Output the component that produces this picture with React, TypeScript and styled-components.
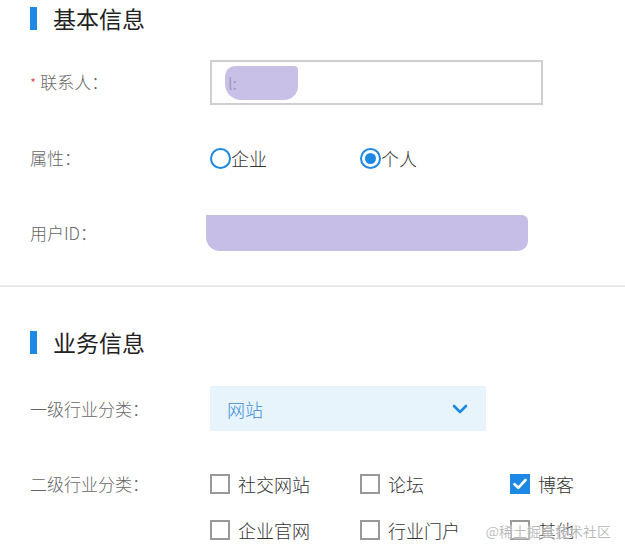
import styled, { createGlobalStyle } from 'styled-components';

const GlobalStyle = createGlobalStyle`
  body {
    margin: 0;
    background: #fff;
    font-family: "Noto Sans CJK SC", "Noto Sans", sans-serif;
  }
`;

const BLUE = '#1e88e5';

const CHECK_OPTIONS = [
  { label: '社交网站', checked: false },
  { label: '论坛', checked: false },
  { label: '博客', checked: true },
  { label: '企业官网', checked: false },
  { label: '行业门户', checked: false },
  { label: '其他', checked: false },
];

const App = () => {
  return (
    <Page>
      <GlobalStyle />
      <Section>
        <Heading>基本信息</Heading>
        <Rows>
          <Row>
            <Label>
              <Required>*</Required>联系人：
            </Label>
            <TextBox>
              <Redaction $width={73} $height={34}>
                <Faded>l:</Faded>
              </Redaction>
            </TextBox>
          </Row>
          <Row>
            <Label>属性：</Label>
            <RadioGroup>
              <RadioItem>
                <RadioCircle $checked={false} />
                企业
              </RadioItem>
              <RadioItem>
                <RadioCircle $checked />
                个人
              </RadioItem>
            </RadioGroup>
          </Row>
          <Row>
            <Label>用户ID：</Label>
            <IdRedaction />
          </Row>
        </Rows>
      </Section>
      <Divider />
      <Section $top={44}>
        <Heading>业务信息</Heading>
        <Rows $top={32}>
          <Row>
            <Label>一级行业分类：</Label>
            <Select>
              <span>网站</span>
              <svg width='16' height='10' viewBox='0 0 16 10'>
                <path d='M2 2l6 6 6-6' fill='none' stroke={BLUE} strokeWidth='2.6' strokeLinecap='round' strokeLinejoin='round' />
              </svg>
            </Select>
          </Row>
          <CheckRow>
            <Label>二级行业分类：</Label>
            <CheckGrid>
              {CHECK_OPTIONS.map((option) => (
                <CheckItem key={option.label}>
                  <CheckBox $checked={option.checked}>
                    {option.checked && (
                      <svg width='14' height='12' viewBox='0 0 14 12'>
                        <path d='M1.5 6.2l3.8 3.6L12.5 2' fill='none' stroke='#fff' strokeWidth='2.6' strokeLinecap='round' strokeLinejoin='round' />
                      </svg>
                    )}
                  </CheckBox>
                  {option.label}
                </CheckItem>
              ))}
            </CheckGrid>
          </CheckRow>
        </Rows>
      </Section>
      <Watermark>@稀土掘金技术社区</Watermark>
    </Page>
  );
};

const Page = styled.div`
  position: relative;
  width: 625px;
  height: 557px;
  overflow: hidden;
`;

const Section = styled.section<{ $top?: number }>`
  padding: ${({ $top }) => $top ?? 7}px 0 30px 30px;
`;

const Heading = styled.h2`
  display: flex;
  align-items: center;
  height: 23px;
  margin: 0;
  color: #222;
  font-size: 23px;
  font-weight: 400;
  line-height: 23px;

  &::before {
    content: '';
    width: 7px;
    height: 23px;
    margin-right: 16px;
    background-color: ${BLUE};
  }
`;

const Rows = styled.div<{ $top?: number }>`
  display: flex;
  flex-direction: column;
  gap: 31px;
  margin-top: ${({ $top }) => $top ?? 30}px;
`;

const Row = styled.div`
  display: flex;
  align-items: center;
  min-height: 44px;
`;

const CheckRow = styled.div`
  display: flex;
  align-items: flex-start;
`;

const Label = styled.div`
  width: 180px;
  flex-shrink: 0;
  color: #666;
  font-size: 17px;
  font-weight: 300;
  line-height: 44px;
`;

const Required = styled.span`
  margin-right: 4px;
  color: #e4393c;
  font-size: 14px;
`;

const TextBox = styled.div`
  display: flex;
  align-items: center;
  box-sizing: border-box;
  width: 333px;
  height: 45px;
  padding-left: 13px;
  border: 2px solid #cfcfcf;
`;

const Redaction = styled.div<{ $width: number; $height: number }>`
  display: flex;
  align-items: center;
  width: ${({ $width }) => $width}px;
  height: ${({ $height }) => $height}px;
  border-radius: 10px 4px 14px 16px;
  background-color: #c9c0e8;
`;

const Faded = styled.span`
  margin-left: 3px;
  color: #a39cb8;
  font-size: 16px;
`;

const IdRedaction = styled.div`
  width: 322px;
  height: 36px;
  margin-left: -4px;
  border-radius: 0 6px 10px 14px;
  background-color: #c6bee6;
  filter: blur(0.6px);
`;

const RadioGroup = styled.div`
  display: flex;
`;

const RadioItem = styled.label`
  display: flex;
  align-items: center;
  width: 150px;
  color: #333;
  font-size: 18px;
  font-weight: 300;
`;

const RadioCircle = styled.span<{ $checked: boolean }>`
  position: relative;
  box-sizing: border-box;
  width: 21px;
  height: 21px;
  border: 2px solid ${BLUE};
  border-radius: 50%;

  &::after {
    content: '';
    display: ${({ $checked }) => ($checked ? 'block' : 'none')};
    position: absolute;
    inset: 3px;
    border-radius: 50%;
    background-color: ${BLUE};
  }
`;

const Divider = styled.hr`
  height: 2px;
  margin: 0;
  border: 0;
  background-color: #e8e8e8;
`;

const Select = styled.div`
  display: flex;
  justify-content: space-between;
  align-items: center;
  box-sizing: border-box;
  width: 276px;
  height: 45px;
  padding: 0 18px 0 17px;
  color: #3d8ed8;
  font-size: 18px;
  font-weight: 300;
  background-color: #e8f4fc;
`;

const CheckGrid = styled.div`
  display: grid;
  grid-template-columns: repeat(3, 150px);
  row-gap: 2px;
`;

const CheckItem = styled.label`
  display: flex;
  align-items: center;
  height: 44px;
  color: #333;
  font-size: 18px;
  font-weight: 300;
`;

const CheckBox = styled.span<{ $checked: boolean }>`
  display: flex;
  justify-content: center;
  align-items: center;
  box-sizing: border-box;
  width: 20px;
  height: 20px;
  margin-right: 8px;
  border: 2px solid ${({ $checked }) => ($checked ? BLUE : '#999')};
  background-color: ${({ $checked }) => ($checked ? BLUE : '#fff')};
`;

const Watermark = styled.div`
  position: absolute;
  right: 14px;
  bottom: 16px;
  color: rgba(120, 120, 120, 0.5);
  font-size: 14px;
  text-shadow: 0 0 2px #fff, 0 0 2px #fff;
`;

export default App;
